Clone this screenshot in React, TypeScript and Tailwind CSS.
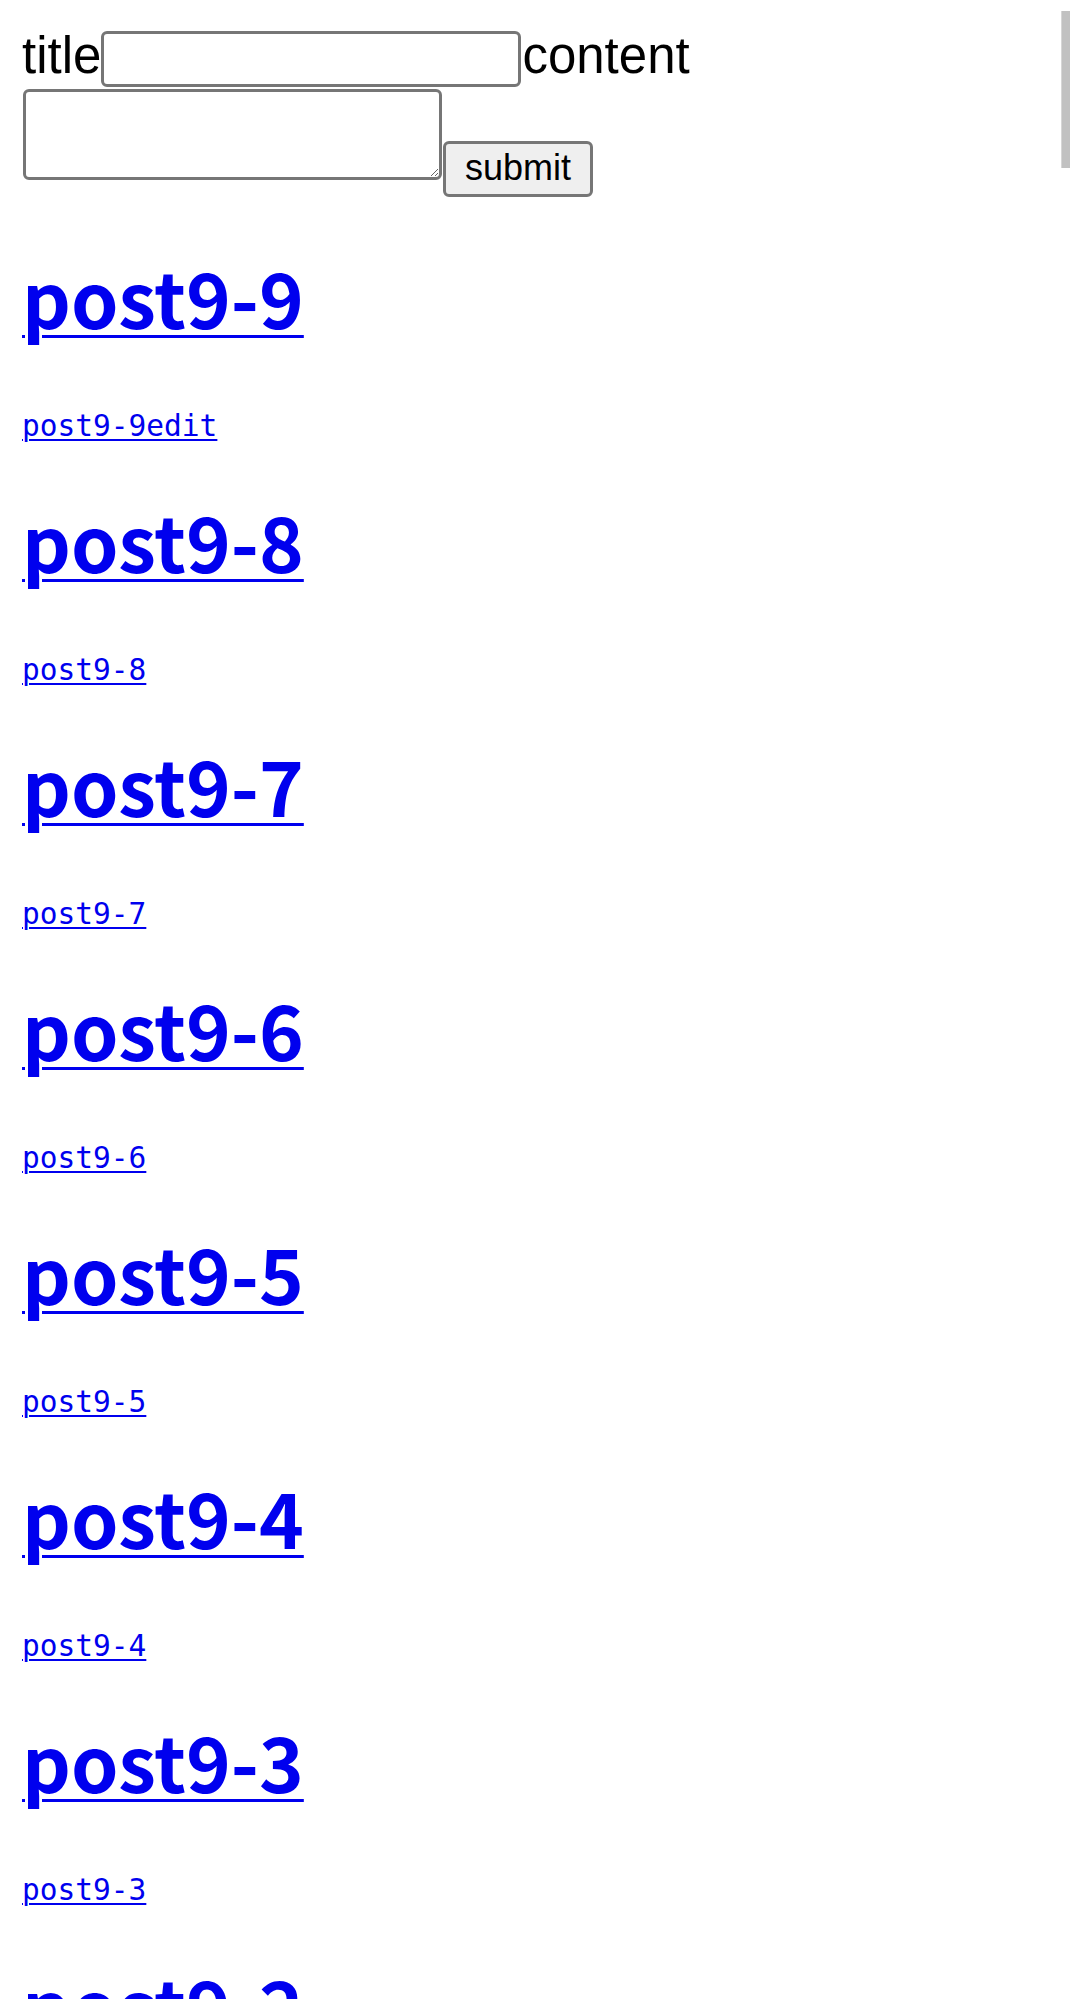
import React from 'react';

const posts = [
    { title: 'post9-9', body: 'post9-9edit' },
    { title: 'post9-8', body: 'post9-8' },
    { title: 'post9-7', body: 'post9-7' },
    { title: 'post9-6', body: 'post9-6' },
    { title: 'post9-5', body: 'post9-5' },
    { title: 'post9-4', body: 'post9-4' },
    { title: 'post9-3', body: 'post9-3' },
    { title: 'post9-2', body: 'post9-2' },
    { title: 'post9-1', body: 'post9-1' },
];

const sans = { fontFamily: '"Liberation Sans", Arial, sans-serif' };

export default function App() {
    return (
        <div className="relative h-[1999px] overflow-hidden bg-white pl-[22px] text-black">
            {/* New post form */}
            <form className="pt-[31px]" style={sans} onSubmit={(e) => e.preventDefault()}>
                <div className="flex h-[56px] items-start">
                    <span className="-mt-[3px] text-[51px] leading-[56px]">title</span>
                    <input
                        type="text"
                        className="h-[56px] w-[420px] rounded-[6px] border-[3px] border-[#767676] bg-white"
                    />
                    <span className="ml-[1px] -mt-[3px] text-[51px] leading-[56px]">content</span>
                </div>
                <div className="mt-[2px] flex items-start">
                    <textarea className="ml-[1px] h-[91px] w-[419px] rounded-[6px] border-[3px] border-[#767676] bg-white" />
                    <button
                        type="submit"
                        className="mt-[52px] ml-[1px] flex h-[56px] w-[150px] items-center justify-center rounded-[6px] border-[3px] border-[#767676] bg-[#efefef] pb-[2px] text-[36px] leading-none"
                    >
                        submit
                    </button>
                </div>
            </form>

            {/* Post list */}
            <div>
                {posts.map((post) => (
                    <div key={post.title} className="pt-[61px]">
                        <h1
                            className="h-[76px] text-[76px] font-bold leading-[76px] text-[#0000ee]"
                            style={{ fontFamily: '"Noto Sans CJK JP", "Noto Sans", sans-serif' }}
                        >
                            <a href="#" className="underline decoration-[3px] underline-offset-[6px]">
                                {post.title}
                            </a>
                        </h1>
                        <p
                            className="mt-[78px] h-[29px] text-[29.5px] leading-[29px] text-[#0000ee]"
                            style={{ fontFamily: '"DejaVu Sans Mono", "Liberation Mono", monospace' }}
                        >
                            <a href="#" className="underline decoration-2 underline-offset-[3px]">
                                {post.body}
                            </a>
                        </p>
                    </div>
                ))}
            </div>

            {/* overlay scrollbar */}
            <div className="absolute top-[11px] right-[11px] h-[157px] w-[9px] border-l border-[#d6d6d6] bg-[#c1c1c1]" />
        </div>
    );
}
